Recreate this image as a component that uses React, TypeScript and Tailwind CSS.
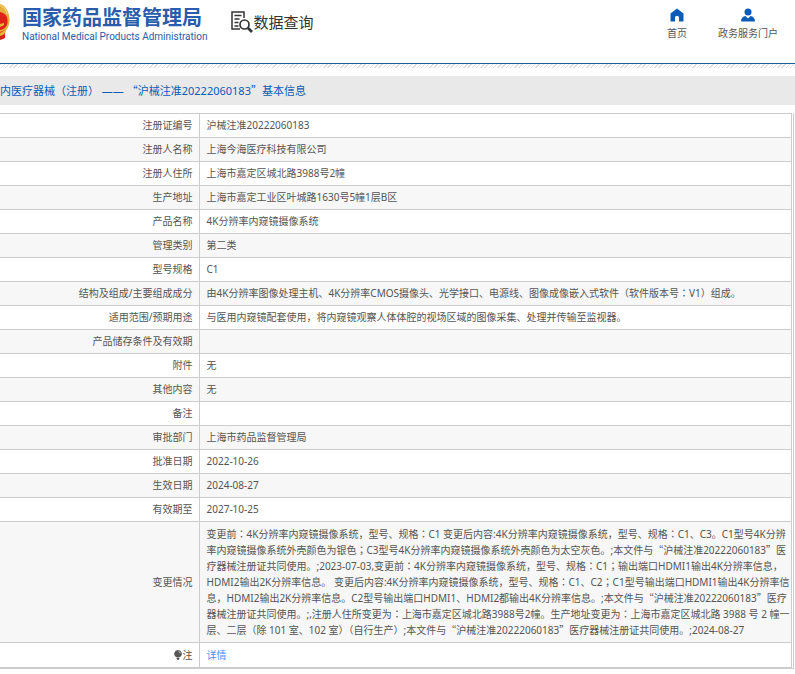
import { Fragment } from "react";

const rows = [
  { label: "注册证编号", value: "沪械注准20222060183" },
  { label: "注册人名称", value: "上海今海医疗科技有限公司" },
  { label: "注册人住所", value: "上海市嘉定区城北路3988号2幢" },
  { label: "生产地址", value: "上海市嘉定工业区叶城路1630号5幢1层B区" },
  { label: "产品名称", value: "4K分辨率内窥镜摄像系统" },
  { label: "管理类别", value: "第二类" },
  { label: "型号规格", value: "C1" },
  { label: "结构及组成/主要组成成分", value: "由4K分辨率图像处理主机、4K分辨率CMOS摄像头、光学接口、电源线、图像成像嵌入式软件（软件版本号：V1）组成。" },
  { label: "适用范围/预期用途", value: "与医用内窥镜配套使用，将内窥镜观察人体体腔的视场区域的图像采集、处理并传输至监视器。" },
  { label: "产品储存条件及有效期", value: "" },
  { label: "附件", value: "无" },
  { label: "其他内容", value: "无" },
  { label: "备注", value: "" },
  { label: "审批部门", value: "上海市药品监督管理局" },
  { label: "批准日期", value: "2022-10-26" },
  { label: "生效日期", value: "2024-08-27" },
  { label: "有效期至", value: "2027-10-25" },
];

const changes = [
  "变更前：4K分辨率内窥镜摄像系统，型号、规格：C1 变更后内容:4K分辨率内窥镜摄像系统，型号、规格：C1、C3。C1型号4K分辨",
  "率内窥镜摄像系统外壳颜色为银色；C3型号4K分辨率内窥镜摄像系统外壳颜色为太空灰色。;本文件与“沪械注准20222060183”医",
  "疗器械注册证共同使用。;2023-07-03,变更前：4K分辨率内窥镜摄像系统，型号、规格：C1；输出端口HDMI1输出4K分辨率信息，",
  "HDMI2输出2K分辨率信息。 变更后内容:4K分辨率内窥镜摄像系统，型号、规格：C1、C2；C1型号输出端口HDMI1输出4K分辨率信",
  "息，HDMI2输出2K分辨率信息。C2型号输出端口HDMI1、HDMI2都输出4K分辨率信息。;本文件与“沪械注准20222060183”医疗",
  "器械注册证共同使用。;,注册人住所变更为：上海市嘉定区城北路3988号2幢。生产地址变更为：上海市嘉定区城北路 3988 号 2 幢一",
  "层、二层（除 101 室、102 室）（自行生产）;本文件与“沪械注准20222060183”医疗器械注册证共同使用。;2024-08-27",
];

// Full-width quotes, and colons centred in their square
function Zh({ text }: { text: string }) {
  return (
    <>
      {text.split(/([“”：；])/).map((part, i) => {
        if (part === "“" || part === "”") {
          return <span key={i} className="font-['Noto_Sans_CJK_SC',sans-serif]">{part}</span>;
        }
        if (part === "：" || part === "；") {
          return <span key={i} lang="ja" className="font-['Noto_Sans_CJK_JP',sans-serif]">{part}</span>;
        }
        return <Fragment key={i}>{part}</Fragment>;
      })}
    </>
  );
}

function Emblem() {
  return (
    <svg className="h-10 w-[10px] shrink-0" viewBox="0 0 10 40" aria-hidden="true">
      <path d="M0 4c5 1 9 7 9.500 15 .3 7-3 13-9.500 16z" fill="#e5ad3c" />
      <path d="M0 5c4 2 6 5 7 9" fill="none" stroke="#f8dc80" strokeWidth="1" />
      <path d="M0 12c5 1 7.500 4 7.500 9S5 29 0 30z" fill="#df2119" />
      <path d="M0 24l4-1v2l-4 2z" fill="#f0b63c" />
      <path d="M0 32l5-2v8l-2 1-3 1z" fill="#d8201a" />
      <path d="M0 33l5-3 1 2-3 3-3 1z" fill="#e9b23b" />
    </svg>
  );
}

function QueryIcon() {
  return (
    <svg className="mt-px h-[22px] w-[22px] shrink-0" viewBox="0 0 22 22" fill="none" stroke="#333" aria-hidden="true">
      <path d="M13 7V1H1v17h8" strokeWidth="1.500" />
      <path d="M3.500 4.500h7M3.500 8h5M3.500 11.500h4M3.500 15h4" strokeWidth="1.300" />
      <circle cx="13.500" cy="13.500" r="4.500" strokeWidth="1.700" />
      <path d="M17 17l4 4" strokeWidth="2.600" />
    </svg>
  );
}

function HomeIcon() {
  return (
    <svg className="h-[14px] w-[14px]" viewBox="0 0 14 14" fill="#0b5cb8" aria-hidden="true">
      <path d="M7 .5L.5 5.500V13.500H5V9.500c0-1 .8-1.500 2-1.500s2 .5 2 1.500v4h4.500v-8z" />
    </svg>
  );
}

function UserIcon() {
  return (
    <svg className="h-[14px] w-[14px]" viewBox="0 0 14 14" fill="#0b5cb8" aria-hidden="true">
      <circle cx="7" cy="4" r="3.500" />
      <path d="M0 13.500c0-3.500 2-5 4.500-5.500L7 10.500 9.500 8C12 8.500 14 10 14 13.500z" />
    </svg>
  );
}

function BulbIcon() {
  return (
    <svg className="h-[10px] w-2" viewBox="0 0 8 10" fill="#555" aria-hidden="true">
      <path d="M4 0a3.800 3.800 0 0 0-2 7h4a3.800 3.800 0 0 0-2-7zM2.500 7.500h3v1l-1 1.500h-1l-1-1.500z" />
      <path d="M4.500 1.500c1 .2 1.600.8 1.800 1.800" stroke="#fff" strokeWidth=".7" fill="none" />
    </svg>
  );
}

export default function App() {
  return (
    <div lang="zh-CN" className="min-h-screen overflow-hidden bg-white font-['Noto_Sans','Noto_Sans_CJK_SC',sans-serif] text-[10px] leading-4 text-[#555]">
      <header className="flex h-16 items-start justify-between border-b border-[#1b6093] pr-[17px]">
        <div className="flex items-start">
          <Emblem />
          <div className="ml-3 pt-[6px] text-[#2a5cac]">
            <h1 className="text-[20px] leading-6 font-bold whitespace-nowrap">国家药品监督管理局</h1>
            <p className="font-[Roboto,sans-serif] text-[10px] leading-[14px] whitespace-nowrap">National Medical Products Administration</p>
          </div>
          <div className="ml-6 flex items-center pt-[10px] text-[15px] leading-5 text-[#333]">
            <QueryIcon />
            <span className="whitespace-nowrap">数据查询</span>
          </div>
        </div>
        <nav className="flex gap-[31px] pt-2">
          <a href="#home" className="flex flex-col items-center gap-[3px]">
            <HomeIcon />
            首页
          </a>
          <a href="#portal" className="flex flex-col items-center gap-[3px]">
            <UserIcon />
            政务服务门户
          </a>
        </nav>
      </header>
      <div className="h-1 bg-[repeating-linear-gradient(135deg,#ddd_0px,#ddd_1px,#fff_1px,#fff_3px)]" />

      <h2 className="mt-2 bg-[#e9e9e9] py-[6px] text-[11px] leading-4 whitespace-nowrap text-[#0b5cb8]">
        <Zh text="内医疗器械（注册） —— “沪械注准20222060183”基本信息" />
      </h2>

      <main className="mt-2 mr-px border-r border-b border-[#ccc] pr-px">
        <table className="w-full table-fixed border-collapse border-y border-r border-[#ccc]">
          <colgroup>
            <col className="w-[199px]" />
            <col />
          </colgroup>
          <tbody>
            {rows.map((row) => (
              <tr key={row.label} className="h-6 border-b border-[#ccc] even:bg-[#f7f7f7]">
                <th scope="row" className="border-r border-[#ccc] pt-[3px] pr-[6px] pb-1 text-right font-normal">{row.label}</th>
                <td className="pt-[3px] pb-1 pl-[7px] whitespace-nowrap"><Zh text={row.value} /></td>
              </tr>
            ))}
            <tr className="border-b border-[#ccc] bg-[#f7f7f7]">
              <th scope="row" className="border-r border-[#ccc] py-1 pr-[6px] text-right font-normal">变更情况</th>
              <td className="py-1 pl-[7px] whitespace-nowrap">
                {changes.map((line) => (
                  <div key={line}><Zh text={line} /></div>
                ))}
              </td>
            </tr>
            <tr>
              <th scope="row" className="border-r border-[#ccc] py-1 pr-[6px] font-normal">
                <span className="flex items-center justify-end gap-px"><BulbIcon />注</span>
              </th>
              <td className="py-1 pl-[7px]">
                <a href="#detail" className="text-[#3b97f3]">详情</a>
              </td>
            </tr>
          </tbody>
        </table>
      </main>
    </div>
  );
}
